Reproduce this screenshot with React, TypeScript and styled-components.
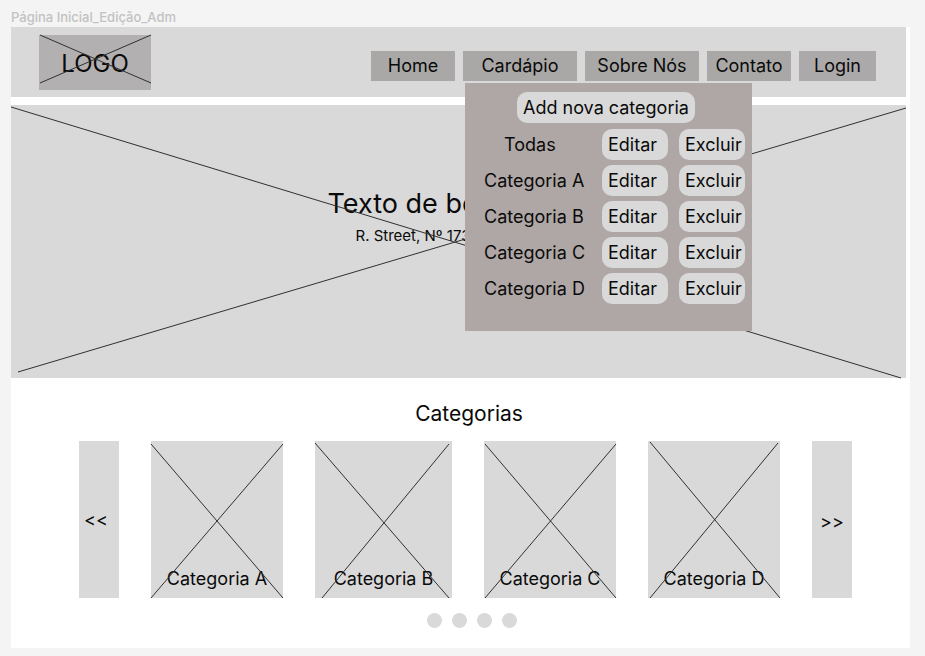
import React from "react";
import styled, { createGlobalStyle } from "styled-components";

const GlobalStyle = createGlobalStyle`
  *, *::before, *::after { box-sizing: border-box; }
  body {
    margin: 0;
    background: #f4f4f4;
    color: #0a0a0a;
    font-family: Inter, "Liberation Sans", sans-serif;
    font-size: 18px;
    line-height: 24px;
  }
  button { font: inherit; color: inherit; border: 0; padding: 0; cursor: pointer; }
  h1, h2, p, ul { margin: 0; padding: 0; font-weight: 400; }
  ul { list-style: none; }
`;

const Page = styled.div`
  padding: 7px 15px 8px 11px;
`;

const FrameName = styled.p`
  height: 20px;
  font-size: 13px;
  font-weight: 500;
  line-height: 20px;
  color: #c2c2c2;
`;

const Frame = styled.div`
  background: #ffffff;
`;

const Header = styled.header`
  display: flex;
  justify-content: space-between;
  align-items: flex-start;
  height: 70px;
  margin-right: 4px;
  padding: 8px 30px 0 28px;
  background: #d9d9d9;
`;

const Logo = styled.a`
  position: relative;
  display: flex;
  align-items: center;
  justify-content: center;
  width: 112px;
  height: 55px;
  padding-top: 2px;
  background: #b3b0b1;
  color: inherit;
  font-size: 24px;
  text-decoration: none;
`;

const Nav = styled.nav`
  display: grid;
  grid-template-columns: 84px 114px 114px 84px 77px;
  gap: 8px;
  padding-top: 16px;
`;

const NavItem = styled.div`
  position: relative;
`;

const NavButton = styled.button<{ $tone?: string }>`
  display: block;
  width: 100%;
  height: 30px;
  background: ${(p) => p.$tone ?? "#a9a8a6"};
`;

const Menu = styled.div`
  position: absolute;
  z-index: 2;
  top: 32px;
  left: 2px;
  width: 287px;
  padding: 9px 7px 22px 19px;
  background: #afa7a5;
`;

const PillButton = styled.button`
  height: 31px;
  padding: 0 6px;
  border-radius: 10px;
  background: #d9d9d9;
  text-align: left;
  white-space: nowrap;
`;

const AddRow = styled.div`
  display: flex;
  padding: 0 0 6px 33px;
`;

const MenuRow = styled.li`
  display: grid;
  grid-template-columns: 1fr 66px 66px;
  column-gap: 11px;
  align-items: center;
  height: 31px;
  margin-bottom: 5px;
`;

const MenuLabel = styled.span<{ $indent?: boolean }>`
  padding-left: ${(p) => (p.$indent ? 20 : 0)}px;
  white-space: nowrap;
`;

const Hero = styled.section`
  position: relative;
  display: flex;
  flex-direction: column;
  align-items: center;
  height: 273px;
  margin: 8px 4px 0 0;
  padding-top: 81px;
  background: #d9d9d9;
`;

const HeroCopy = styled.div`
  width: 262px;
`;

const HeroTitle = styled.h1`
  font-size: 27px;
  line-height: 36px;
`;

const HeroAddress = styled.p`
  padding: 4px 0 0 28px;
  font-size: 15px;
  line-height: 20px;
`;

const CrossSvg = styled.svg`
  position: absolute;
  inset: 0;
  width: 100%;
  height: 100%;
  overflow: visible;
  pointer-events: none;

  line {
    stroke: #303030;
    stroke-width: 1;
    vector-effect: non-scaling-stroke;
  }
`;

const Categories = styled.section`
  padding: 22px 58px 20px 68px;
`;

const SectionTitle = styled.h2`
  padding-left: 7px;
  font-size: 21px;
  line-height: 28px;
  text-align: center;
`;

const Carousel = styled.div`
  display: grid;
  grid-template-columns: 40fr 132fr 137fr 132fr 132fr 40fr;
  column-gap: 32px;
  height: 157px;
  margin-top: 13px;
`;

const Arrow = styled.button<{ $previous?: boolean }>`
  padding: ${(p) => (p.$previous ? "0 6px 0 0" : "4px 0 0 0")};
  background: #d9d9d9;
`;

const Card = styled.article`
  position: relative;
  display: flex;
  align-items: flex-end;
  justify-content: center;
  padding-bottom: 7px;
  background: #d9d9d9;
  white-space: nowrap;
`;

const Dots = styled.div`
  display: flex;
  justify-content: center;
  gap: 10px;
  padding: 15px 0 0 12px;
`;

const Dot = styled.button`
  width: 15px;
  height: 15px;
  border-radius: 50%;
  background: #d9d9d9;
`;

type Line = [number, number, number, number];

function Cross({ width, height, lines }: { width: number; height: number; lines: Line[] }) {
  return (
    <CrossSvg viewBox={`0 0 ${width} ${height}`} preserveAspectRatio="none" aria-hidden="true">
      {lines.map(([x1, y1, x2, y2], i) => (
        <line key={i} x1={x1} y1={y1} x2={x2} y2={y2} />
      ))}
    </CrossSvg>
  );
}

const menuEntries = ["Todas", "Categoria A", "Categoria B", "Categoria C", "Categoria D"];

const cards: { name: string; width: number; lines: Line[] }[] = [
  { name: "Categoria A", width: 132, lines: [[0, 3, 132, 157], [132, 3, 0, 157]] },
  { name: "Categoria B", width: 137, lines: [[0, 2, 134, 157], [134, 3, 7, 157]] },
  { name: "Categoria C", width: 132, lines: [[1, 3, 132, 157], [132, 3, 1, 157]] },
  { name: "Categoria D", width: 132, lines: [[2, 1, 132, 157], [130, 2, 2, 157]] },
];

export default function App() {
  return (
    <>
      <GlobalStyle />
      <Page>
        <FrameName>Página Inicial_Edição_Adm</FrameName>
        <Frame>
          <Header>
            <Logo href="#">
              LOGO
              <Cross width={112} height={55} lines={[[1, 0, 112, 48], [112, 0, 1, 48]]} />
            </Logo>
            <Nav>
              <NavItem><NavButton>Home</NavButton></NavItem>
              <NavItem>
                <NavButton aria-expanded="true">Cardápio</NavButton>
                <Menu>
                  <AddRow><PillButton>Add nova categoria</PillButton></AddRow>
                  <ul>
                    {menuEntries.map((name, i) => (
                      <MenuRow key={name}>
                        <MenuLabel $indent={i === 0}>{name}</MenuLabel>
                        <PillButton aria-label={`Editar ${name}`}>Editar</PillButton>
                        <PillButton aria-label={`Excluir ${name}`}>Excluir</PillButton>
                      </MenuRow>
                    ))}
                  </ul>
                </Menu>
              </NavItem>
              <NavItem><NavButton>Sobre Nós</NavButton></NavItem>
              <NavItem><NavButton>Contato</NavButton></NavItem>
              <NavItem><NavButton $tone="#aca9aa">Login</NavButton></NavItem>
            </Nav>
          </Header>
          <Hero>
            <HeroCopy>
              <HeroTitle>Texto de bo</HeroTitle>
              <HeroAddress>R. Street, Nº 173</HeroAddress>
            </HeroCopy>
            <Cross width={895} height={273} lines={[[0, 2, 890, 273], [895, 3, 7, 267]]} />
          </Hero>
          <Categories>
            <SectionTitle>Categorias</SectionTitle>
            <Carousel>
              <Arrow $previous>&lt;&lt;</Arrow>
              {cards.map((card) => (
                <Card key={card.name}>
                  {card.name}
                  <Cross width={card.width} height={157} lines={card.lines} />
                </Card>
              ))}
              <Arrow>&gt;&gt;</Arrow>
            </Carousel>
            <Dots>
              {cards.map((card) => (
                <Dot key={card.name} aria-label={card.name} />
              ))}
            </Dots>
          </Categories>
        </Frame>
      </Page>
    </>
  );
}
